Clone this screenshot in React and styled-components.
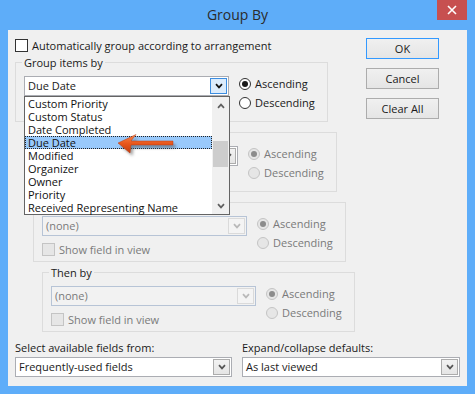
import React from 'react';
import styled, { createGlobalStyle } from 'styled-components';

const GlobalStyle = createGlobalStyle`
  html, body { margin: 0; padding: 0; background: #fff; }
  body {
    font-family: 'Open Sans', 'Noto Sans', sans-serif;
    font-size: 11px;
    color: #1a1a1a;
  }
`;

const listItems = [
  'Custom Priority',
  'Custom Status',
  'Date Completed',
  'Due Date',
  'Modified',
  'Organizer',
  'Owner',
  'Priority',
  'Received Representing Name',
];

// chevron used by combo boxes and the scroll bar
const Chevron = ({ up, color = '#1a1a1a' }) => (
  <svg width="8" height="6" viewBox="0 0 8 6">
    <path
      d={up ? 'M1 4.8 L4 1.6 L7 4.8' : 'M1 1.2 L4 4.4 L7 1.2'}
      fill="none"
      stroke={color}
      strokeWidth="1.7"
    />
  </svg>
);

const PointerArrow = () => (
  <ArrowSvg width="64" height="28" viewBox="0 0 64 28">
    <defs>
      <linearGradient id="arrowFill" x1="0" y1="0" x2="0" y2="1">
        <stop offset="0" stopColor="#f7874a" />
        <stop offset="0.5" stopColor="#e8561c" />
        <stop offset="1" stopColor="#c23e12" />
      </linearGradient>
      <filter id="arrowBlur" x="-20%" y="-50%" width="140%" height="200%">
        <feGaussianBlur stdDeviation="1.4" />
      </filter>
    </defs>
    <polygon
      points="3,12 21,3.5 16,10 58,10 58,14 16,14 15,22"
      fill="#555"
      opacity="0.55"
      filter="url(#arrowBlur)"
      transform="translate(2.5 3)"
    />
    <polygon
      points="3,12 21,3.5 16,10 58,10 58,14 16,14 15,22"
      fill="url(#arrowFill)"
      stroke="#b83a10"
      strokeWidth="0.5"
    />
  </ArrowSvg>
);

const Select = ({ value, disabled, hot, covered, children }) => (
  <SelectBox $disabled={disabled}>
    <SelectText $disabled={disabled} $covered={covered}>
      {value}
    </SelectText>
    <SelectButton $disabled={disabled} $hot={hot}>
      <Chevron color={disabled ? '#b9b9b9' : hot ? '#111' : '#555'} />
    </SelectButton>
    {children}
  </SelectBox>
);

const Radio = ({ label, checked, disabled }) => (
  <RadioRow $disabled={disabled}>
    <RadioCircle $disabled={disabled}>{checked && <RadioDot $disabled={disabled} />}</RadioCircle>
    {label}
  </RadioRow>
);

const Check = ({ label, disabled, covered }) => (
  <CheckRow $disabled={disabled} $covered={covered}>
    <CheckBox $disabled={disabled} />
    {label}
  </CheckRow>
);

// the "Then by" boxes; the top ones sit under the open list
const SortGroup = ({ title, indent, fieldDisabled, covered }) => (
  <Group $indent={indent}>
    <Legend $covered={covered}>{title}</Legend>
    <GroupBody>
      <GroupLeft>
        <Select value="(none)" disabled={fieldDisabled} covered={covered === 'all'} />
        <Check label="Show field in view" disabled covered={covered === 'all'} />
      </GroupLeft>
      <Radios>
        <Radio label="Ascending" checked disabled />
        <Radio label="Descending" disabled />
      </Radios>
    </GroupBody>
  </Group>
);

const App = () => {
  return (
    <>
      <GlobalStyle />
      <Window>
        <TitleBar>
          <Title>Group By</Title>
          <CloseButton>
            <svg width="10" height="10" viewBox="0 0 10 10">
              <path d="M1 1 L9 9 M9 1 L1 9" stroke="#fff" strokeWidth="1.6" />
            </svg>
          </CloseButton>
        </TitleBar>
        <Client>
          <Top>
            <Main>
              <Check label="Automatically group according to arrangement" />
              <Group $indent={0}>
                <Legend>Group items by</Legend>
                <GroupBody>
                  <GroupLeft>
                    <Select value="Due Date" hot>
                      <List>
                        <Items>
                          {listItems.map((item) => (
                            <Item key={item} $selected={item === 'Due Date'}>
                              {item}
                            </Item>
                          ))}
                        </Items>
                        <ScrollBar>
                          <ScrollArrow>
                            <Chevron up color="#606060" />
                          </ScrollArrow>
                          <Thumb />
                          <ScrollArrow $bottom>
                            <Chevron color="#606060" />
                          </ScrollArrow>
                        </ScrollBar>
                        <PointerArrow />
                      </List>
                    </Select>
                  </GroupLeft>
                  <Radios>
                    <Radio label="Ascending" checked />
                    <Radio label="Descending" />
                  </Radios>
                </GroupBody>
              </Group>
              <SortGroup title="Then by" indent={9} covered="all" />
              <SortGroup title="Then by" indent={18} fieldDisabled covered="legend" />
              <SortGroup title="Then by" indent={27} fieldDisabled />
            </Main>
            <Buttons>
              <Button $default>OK</Button>
              <Button>Cancel</Button>
              <Button>Clear All</Button>
            </Buttons>
          </Top>
          <Bottom>
            <Field>
              <Label>Select available fields from:</Label>
              <Select value="Frequently-used fields" />
            </Field>
            <Field>
              <Label>Expand/collapse defaults:</Label>
              <Select value="As last viewed" />
            </Field>
          </Bottom>
        </Client>
      </Window>
    </>
  );
};

const Window = styled.div`
  width: 475px;
  height: 394px;
  box-sizing: border-box;
  background: #5eadf9;
  display: flex;
  flex-direction: column;
  padding: 0 8px 8px;
`;

const TitleBar = styled.div`
  height: 30px;
  display: grid;
  grid-template-columns: 30px 1fr 30px;
`;

const Title = styled.div`
  grid-column: 2;
  text-align: center;
  line-height: 30px;
  font-size: 14px;
  color: #2b2b2b;
`;

const CloseButton = styled.div`
  grid-column: 3;
  height: 20px;
  background: #c75050;
  display: grid;
  place-items: center;
`;

const Client = styled.div`
  flex: 1;
  background: #f0f0f0;
  padding: 9px 7px 0;
  display: flex;
  flex-direction: column;
`;

const Top = styled.div`
  display: flex;
  align-items: flex-start;
`;

const Main = styled.div`
  width: 340px;
  display: flex;
  flex-direction: column;
`;

const CheckRow = styled.div`
  display: flex;
  align-items: center;
  gap: 4px;
  height: 13px;
  line-height: 13px;
  color: ${(p) => (p.$disabled ? '#7a7a7a' : '#1a1a1a')};
  visibility: ${(p) => (p.$covered ? 'hidden' : 'visible')};
`;

const CheckBox = styled.span`
  width: 13px;
  height: 13px;
  box-sizing: border-box;
  border: 1px solid ${(p) => (p.$disabled ? '#c4c4c4' : '#333')};
  background: ${(p) => (p.$disabled ? '#e6e6e6' : '#fff')};
`;

const Group = styled.div`
  margin-top: 10px;
  margin-left: ${(p) => p.$indent}px;
  width: 313px;
  height: 60px;
  box-sizing: border-box;
  border: 1px solid #dcdcdc;
  padding-left: 8px;
  display: flex;
  flex-direction: column;
`;

const Legend = styled.div`
  align-self: flex-start;
  margin: -8px 0 0 -2px;
  padding: 0 2px;
  height: 15px;
  line-height: 15px;
  background: #f0f0f0;
  visibility: ${(p) => (p.$covered ? 'hidden' : 'visible')};
`;

const GroupBody = styled.div`
  display: flex;
  margin-top: 6px;
`;

const GroupLeft = styled.div`
  width: 205px;
  display: flex;
  flex-direction: column;
  gap: 7px;
`;

const Radios = styled.div`
  margin: -2px 0 0 10px;
  display: flex;
  flex-direction: column;
`;

const RadioRow = styled.div`
  height: 19px;
  display: flex;
  align-items: center;
  gap: 4px;
  color: ${(p) => (p.$disabled ? '#7a7a7a' : '#1a1a1a')};
`;

const RadioCircle = styled.span`
  width: 12px;
  height: 12px;
  box-sizing: border-box;
  border-radius: 50%;
  border: 1px solid ${(p) => (p.$disabled ? '#c4c4c4' : '#333')};
  background: ${(p) => (p.$disabled ? '#e6e6e6' : '#fff')};
  display: grid;
  place-items: center;
`;

const RadioDot = styled.span`
  width: 6px;
  height: 6px;
  border-radius: 50%;
  background: ${(p) => (p.$disabled ? '#8c8c8c' : '#1a1a1a')};
`;

const SelectBox = styled.div`
  position: relative;
  height: 20px;
  box-sizing: border-box;
  border: 1px solid ${(p) => (p.$disabled ? '#b7c4d6' : '#abadb3')};
  background: ${(p) => (p.$disabled ? '#f2f2f2' : '#fff')};
  display: flex;
  align-items: stretch;
`;

const SelectText = styled.span`
  flex: 1;
  padding-left: 3px;
  line-height: 18px;
  white-space: nowrap;
  color: ${(p) => (p.$disabled ? '#7a7a7a' : '#1a1a1a')};
  visibility: ${(p) => (p.$covered ? 'hidden' : 'visible')};
`;

const SelectButton = styled.span`
  width: 15px;
  margin: 1px;
  border: 1px solid
    ${(p) => (p.$hot ? '#3c8de0' : p.$disabled ? '#dadada' : '#acacac')};
  background: ${(p) =>
    p.$hot ? '#dcecfc' : p.$disabled ? '#f4f4f4' : 'linear-gradient(#f2f2f2, #e5e5e5)'};
  display: grid;
  place-items: center;
`;

const List = styled.div`
  position: absolute;
  top: 19px;
  left: -1px;
  width: 206px;
  height: 119px;
  box-sizing: border-box;
  border: 1px solid #646464;
  background: #fff;
  display: flex;
  z-index: 2;
`;

const Items = styled.div`
  flex: 1;
  display: flex;
  flex-direction: column;
`;

const Item = styled.div`
  height: 13px;
  line-height: 13px;
  padding-left: 3px;
  white-space: nowrap;
  color: #111;
  background: ${(p) => (p.$selected ? '#99c9fb' : 'transparent')};
  outline: ${(p) => (p.$selected ? '1px dotted #222' : 'none')};
  outline-offset: -1px;
`;

const ScrollBar = styled.div`
  width: 17px;
  background: #f0f0f0;
  display: flex;
  flex-direction: column;
`;

const ScrollArrow = styled.div`
  height: 17px;
  margin-top: ${(p) => (p.$bottom ? 'auto' : '0')};
  display: grid;
  place-items: center;
`;

const Thumb = styled.div`
  margin: 27px 1px 0;
  height: 26px;
  background: #cdcdcd;
`;

const ArrowSvg = styled.svg`
  position: absolute;
  left: 90px;
  top: 34px;
`;

const Buttons = styled.div`
  margin: -1px 0 0 11px;
  display: flex;
  flex-direction: column;
  gap: 9px;
`;

const Button = styled.div`
  width: 73px;
  height: 21px;
  box-sizing: border-box;
  border: 1px solid ${(p) => (p.$default ? '#3399ff' : '#acacac')};
  background: linear-gradient(#f0f0f0, #e5e5e5);
  display: grid;
  place-items: center;
  color: #1a1a1a;
`;

const Bottom = styled.div`
  display: grid;
  grid-template-columns: 217px 218px;
  column-gap: 10px;
  margin-top: 8px;
`;

const Field = styled.div`
  display: flex;
  flex-direction: column;
  gap: 2px;
`;

const Label = styled.div`
  line-height: 15px;
`;

export default App;
